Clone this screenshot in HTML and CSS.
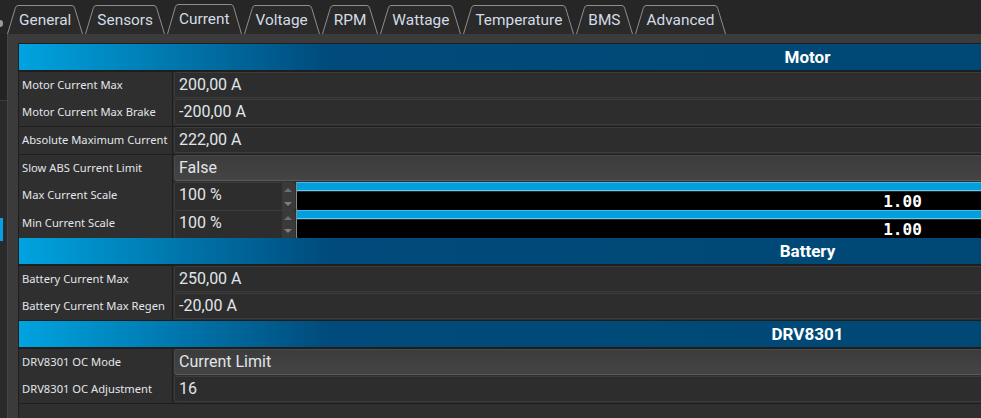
FILE: index.html
```html
<!DOCTYPE html>
<html>
<head>
<meta charset="utf-8">
<link rel="stylesheet" href="styles.css">
</head>
<body>
<div class="app">
  <div class="tabbar">
    <div class="stub"><span class="knob"></span></div>
    <div class="tab"><svg class="edge" width="11" height="29" viewBox="0 0 11 29"><path class="fill" d="M0,29 L8.2,3 Q9,0 11,0 L11,29 Z"/><path class="line" d="M0.5,29 L8.2,3.5 Q9,0.5 11,0.5"/></svg><span class="tt">General</span><svg class="edge" width="11" height="29" viewBox="0 0 11 29"><path class="fill" d="M0,0 Q2,0 2.8,3 L11,29 L0,29 Z"/><path class="line" d="M0,0.5 Q2,0.5 2.8,3.5 L10.5,29"/></svg></div>
    <div class="tab"><svg class="edge" width="11" height="29" viewBox="0 0 11 29"><path class="fill" d="M0,29 L8.2,3 Q9,0 11,0 L11,29 Z"/><path class="line" d="M0.5,29 L8.2,3.5 Q9,0.5 11,0.5"/></svg><span class="tt">Sensors</span><svg class="edge" width="11" height="29" viewBox="0 0 11 29"><path class="fill" d="M0,0 Q2,0 2.8,3 L11,29 L0,29 Z"/><path class="line" d="M0,0.5 Q2,0.5 2.8,3.5 L10.5,29"/></svg></div>
    <div class="tab sel"><svg class="edge" width="11" height="30" viewBox="0 0 11 30"><path class="fill" d="M0,30 L8.2,3 Q9,0 11,0 L11,30 Z"/><path class="line" d="M0.5,30 L8.2,3.5 Q9,0.5 11,0.5"/></svg><span class="tt">Current</span><svg class="edge" width="11" height="30" viewBox="0 0 11 30"><path class="fill" d="M0,0 Q2,0 2.8,3 L11,30 L0,30 Z"/><path class="line" d="M0,0.5 Q2,0.5 2.8,3.5 L10.5,30"/></svg></div>
    <div class="tab"><svg class="edge" width="11" height="29" viewBox="0 0 11 29"><path class="fill" d="M0,29 L8.2,3 Q9,0 11,0 L11,29 Z"/><path class="line" d="M0.5,29 L8.2,3.5 Q9,0.5 11,0.5"/></svg><span class="tt">Voltage</span><svg class="edge" width="11" height="29" viewBox="0 0 11 29"><path class="fill" d="M0,0 Q2,0 2.8,3 L11,29 L0,29 Z"/><path class="line" d="M0,0.5 Q2,0.5 2.8,3.5 L10.5,29"/></svg></div>
    <div class="tab"><svg class="edge" width="11" height="29" viewBox="0 0 11 29"><path class="fill" d="M0,29 L8.2,3 Q9,0 11,0 L11,29 Z"/><path class="line" d="M0.5,29 L8.2,3.5 Q9,0.5 11,0.5"/></svg><span class="tt">RPM</span><svg class="edge" width="11" height="29" viewBox="0 0 11 29"><path class="fill" d="M0,0 Q2,0 2.8,3 L11,29 L0,29 Z"/><path class="line" d="M0,0.5 Q2,0.5 2.8,3.5 L10.5,29"/></svg></div>
    <div class="tab"><svg class="edge" width="11" height="29" viewBox="0 0 11 29"><path class="fill" d="M0,29 L8.2,3 Q9,0 11,0 L11,29 Z"/><path class="line" d="M0.5,29 L8.2,3.5 Q9,0.5 11,0.5"/></svg><span class="tt">Wattage</span><svg class="edge" width="11" height="29" viewBox="0 0 11 29"><path class="fill" d="M0,0 Q2,0 2.8,3 L11,29 L0,29 Z"/><path class="line" d="M0,0.5 Q2,0.5 2.8,3.5 L10.5,29"/></svg></div>
    <div class="tab"><svg class="edge" width="11" height="29" viewBox="0 0 11 29"><path class="fill" d="M0,29 L8.2,3 Q9,0 11,0 L11,29 Z"/><path class="line" d="M0.5,29 L8.2,3.5 Q9,0.5 11,0.5"/></svg><span class="tt">Temperature</span><svg class="edge" width="11" height="29" viewBox="0 0 11 29"><path class="fill" d="M0,0 Q2,0 2.8,3 L11,29 L0,29 Z"/><path class="line" d="M0,0.5 Q2,0.5 2.8,3.5 L10.5,29"/></svg></div>
    <div class="tab"><svg class="edge" width="11" height="29" viewBox="0 0 11 29"><path class="fill" d="M0,29 L8.2,3 Q9,0 11,0 L11,29 Z"/><path class="line" d="M0.5,29 L8.2,3.5 Q9,0.5 11,0.5"/></svg><span class="tt">BMS</span><svg class="edge" width="11" height="29" viewBox="0 0 11 29"><path class="fill" d="M0,0 Q2,0 2.8,3 L11,29 L0,29 Z"/><path class="line" d="M0,0.5 Q2,0.5 2.8,3.5 L10.5,29"/></svg></div>
    <div class="tab"><svg class="edge" width="11" height="29" viewBox="0 0 11 29"><path class="fill" d="M0,29 L8.2,3 Q9,0 11,0 L11,29 Z"/><path class="line" d="M0.5,29 L8.2,3.5 Q9,0.5 11,0.5"/></svg><span class="tt">Advanced</span><svg class="edge" width="11" height="29" viewBox="0 0 11 29"><path class="fill" d="M0,0 Q2,0 2.8,3 L11,29 L0,29 Z"/><path class="line" d="M0,0.5 Q2,0.5 2.8,3.5 L10.5,29"/></svg></div>
  </div>
  <div class="main">
    <div class="side">
      <div class="side-top"></div>
      <div class="side-list"><div class="side-sel"></div></div>
    </div>
    <div class="pane">
      <div class="table">
        <div class="hdr">Motor</div>
        <div class="row"><div class="lbl">Motor Current Max</div><div class="val"><div class="box">200,00 A</div></div></div>
        <div class="row"><div class="lbl">Motor Current Max Brake</div><div class="val"><div class="box">-200,00 A</div></div></div>
        <div class="row"><div class="lbl">Absolute Maximum Current</div><div class="val"><div class="box">222,00 A</div></div></div>
        <div class="row"><div class="lbl">Slow ABS Current Limit</div><div class="val"><div class="combo">False</div></div></div>
        <div class="row"><div class="lbl">Max Current Scale</div><div class="val split">
          <div class="spin"><span class="spin-text">100 %</span><span class="spin-btns"><span class="up"></span><span class="down"></span></span></div>
          <div class="disp"><div class="disp-bar"></div><div class="disp-body">1.00</div></div>
        </div></div>
        <div class="row"><div class="lbl">Min Current Scale</div><div class="val split">
          <div class="spin"><span class="spin-text">100 %</span><span class="spin-btns"><span class="up"></span><span class="down"></span></span></div>
          <div class="disp"><div class="disp-bar"></div><div class="disp-body">1.00</div></div>
        </div></div>
        <div class="hdr">Battery</div>
        <div class="row"><div class="lbl">Battery Current Max</div><div class="val"><div class="box">250,00 A</div></div></div>
        <div class="row"><div class="lbl">Battery Current Max Regen</div><div class="val"><div class="box">-20,00 A</div></div></div>
        <div class="hdr">DRV8301</div>
        <div class="row"><div class="lbl">DRV8301 OC Mode</div><div class="val"><div class="combo">Current Limit</div></div></div>
        <div class="row"><div class="lbl">DRV8301 OC Adjustment</div><div class="val"><div class="box">16</div></div></div>
        <div class="filler"></div>
      </div>
    </div>
  </div>
</div>
</body>
</html>
```

FILE: styles.css
```css
html, body {
  margin: 0;
  padding: 0;
}
body {
  width: 981px;
  height: 418px;
  overflow: hidden;
  background: #262626;
  font-family: Roboto, "Liberation Sans", sans-serif;
}
.app {
  display: flex;
  flex-direction: column;
  height: 418px;
}
.tabbar {
  height: 34px;
  flex: none;
  display: flex;
  align-items: flex-end;
  background: #262626;
}
.stub {
  width: 7px;
  height: 34px;
  flex: none;
  display: flex;
  align-items: flex-start;
}
.knob {
  display: block;
  width: 3px;
  height: 7px;
  margin-top: 20px;
  background: #9a9a9a;
  border-radius: 0 4px 4px 0;
}
.tab {
  display: flex;
  align-items: stretch;
  height: 29px;
  margin-right: 2px;
}
.tab.sel {
  height: 30px;
}
.edge {
  display: block;
  flex: none;
}
.edge .fill {
  fill: #2a2a2a;
}
.edge .line {
  fill: none;
  stroke: #8e8e8e;
  stroke-width: 1;
}
.tt {
  display: block;
  border-top: 1px solid #8e8e8e;
  background: #2a2a2a;
  color: #d3dce6;
  font-size: 15.4px;
  line-height: 29px;
  padding: 0 1px;
  white-space: nowrap;
}
.tab.sel .tt {
  line-height: 28px;
}
.main {
  flex: 1;
  display: flex;
  min-height: 0;
}
.side {
  width: 7px;
  flex: none;
  background: #232323;
  border-right: 1px solid #454545;
  display: flex;
  flex-direction: column;
}
.side-top {
  height: 66px;
  border-bottom: 1px solid #3a3a3a;
}
.side-list {
  flex: 1;
  background: #2a2a2a;
  padding-top: 117px;
}
.side-sel {
  width: 3px;
  height: 23px;
  background: #0aa0e0;
}
.pane {
  flex: 1;
  min-width: 0;
  background: #3b3b3b;
  padding: 9px 0 0 10px;
  overflow: hidden;
}
.table {
  width: 1578px;
  height: 100%;
  box-sizing: border-box;
  background: #1e1e1e;
  border-left: 1px solid #1e1e1e;
  border-top: 1px solid #1e1e1e;
  display: flex;
  flex-direction: column;
  gap: 1.7px;
}
.hdr {
  height: 26px;
  flex: none;
  background: linear-gradient(90deg, #00a3e0 0, #004b7b 310px, #00466f 100%);
  color: #ffffff;
  font-weight: 700;
  font-size: 17px;
  line-height: 26px;
  text-align: center;
}
.row {
  height: 26px;
  flex: none;
  display: grid;
  grid-template-columns: 153px 1fr;
  column-gap: 1px;
}
.lbl {
  background: #2f2f2f;
  color: #e2e6eb;
  font-family: "Noto Sans", "Open Sans", sans-serif;
  font-size: 11.2px;
  line-height: 26px;
  padding-left: 3px;
  white-space: nowrap;
  overflow: hidden;
}
.val {
  background: #2f2f2f;
  padding: 0 0 1px 1px;
  display: flex;
}
.box, .combo {
  flex: 1;
  box-sizing: border-box;
  border: 1px solid #3c3c3c;
  border-radius: 3px;
  background: #2d2d2d;
  color: #e0e5ea;
  font-size: 16px;
  line-height: 24px;
  padding-left: 4px;
}
.combo {
  background: linear-gradient(#3c3c3c, #444444);
  border-color: #4a4a4a #4a4a4a #5a5a5a #4a4a4a;
}
.split {
  padding: 0 0 0 1px;
  gap: 1px;
}
.spin {
  width: 121px;
  flex: none;
  box-sizing: border-box;
  border: 1px solid #3c3c3c;
  border-radius: 3px;
  background: #2d2d2d;
  display: flex;
  margin-bottom: 1px;
}
.spin-text {
  flex: 1;
  color: #e0e5ea;
  font-size: 16px;
  line-height: 24px;
  padding-left: 4px;
}
.spin-btns {
  width: 12px;
  display: flex;
  flex-direction: column;
  background: #3a3a3a;
  border-radius: 0 2px 2px 0;
}
.spin-btns span {
  flex: 1;
  display: flex;
  align-items: center;
  justify-content: center;
}
.spin-btns .up::before {
  content: "";
  border-left: 4px solid transparent;
  border-right: 4px solid transparent;
  border-bottom: 4px solid #6e6e6e;
}
.spin-btns .down::before {
  content: "";
  border-left: 4px solid transparent;
  border-right: 4px solid transparent;
  border-top: 4px solid #7e7e7e;
}
.disp {
  width: 1212px;
  flex: none;
  display: flex;
  flex-direction: column;
  background: #000;
  border-left: 1px solid #8a8a8a;
  border-bottom: 1px solid #8a8a8a;
  border-radius: 0 0 0 4px;
  box-sizing: border-box;
}
.disp-bar {
  height: 9px;
  flex: none;
  box-sizing: border-box;
  background: #00a0dc;
  border-top: 1px solid #48b8ea;
  border-bottom: 1px solid #6ccaf2;
}
.disp-body {
  flex: 1;
  color: #ffffff;
  font-family: "DejaVu Sans Mono", monospace;
  font-weight: 700;
  font-size: 16px;
  line-height: 19px;
  text-align: center;
  border-top: 1px solid #2a2a2a;
}
.filler {
  flex: 1;
  background: #2f2f2f;
}
```
